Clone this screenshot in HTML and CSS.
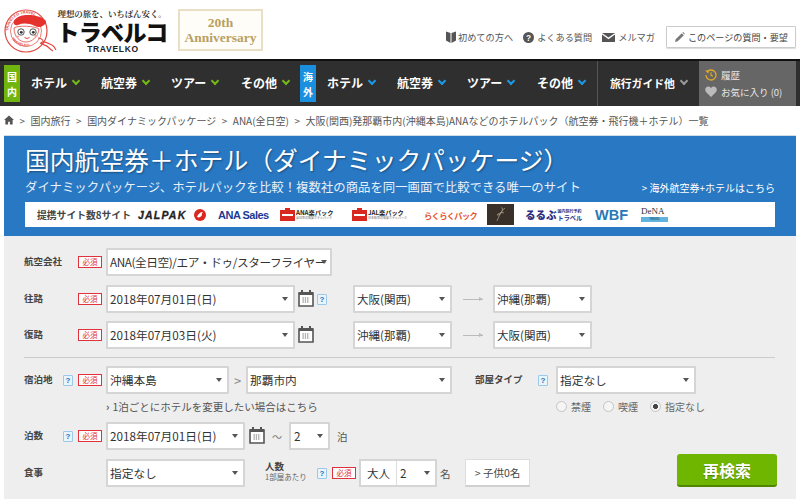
FILE: index.html
```html
<!DOCTYPE html>
<html lang="ja">
<head>
<meta charset="utf-8">
<title>トラベルコ</title>
<link rel="stylesheet" href="styles.css">
</head>
<body>
<header class="top">
  <div class="logo">
    <svg class="mascot" width="58" height="56" viewBox="0 0 58 56">
      <defs><path id="ring" d="M7.500 29a17.500 17.500 0 1 1 35 0"/><path id="ring2" d="M8 31a17.500 17.500 0 0 0 34 0"/></defs>
      <circle cx="25" cy="29" r="21" fill="#fff" stroke="#e2483f" stroke-width="1.200"/>
      <circle cx="25" cy="29" r="15.500" fill="#fff" stroke="#e2483f" stroke-width=".7"/>
      <text class="ring-text"><textPath href="#ring">TRAVELKO TRAVEL</textPath></text>
      <text class="ring-text"><textPath href="#ring2" startOffset="6">TRAVELKO</textPath></text>
      <path d="M13 26c0 9 6 14 12 14s12-5 13-13c-4-3-21-4-25-1z" fill="#fff" stroke="#e2483f" stroke-width=".8"/>
      <path d="M13 19c2-4 8-6 14-6 7 0 14 2 17 5 2 2 1 4-1 5-2 2-6 3-9 1-7-3-12-3-17-1-3 1-5-1-4-4z" fill="#e6322d"/>
      <circle cx="20" cy="30" r="3.200" fill="#fff" stroke="#444" stroke-width=".9"/>
      <circle cx="32" cy="30" r="3.200" fill="#fff" stroke="#444" stroke-width=".9"/>
      <circle cx="20.300" cy="30.300" r="1.400" fill="#333"/>
      <circle cx="32.300" cy="30.300" r="1.400" fill="#333"/>
      <ellipse cx="16.500" cy="34.500" rx="1.800" ry="1" fill="#f2a39c"/>
      <ellipse cx="35" cy="34" rx="1.800" ry="1" fill="#f2a39c"/>
      <path d="M23.500 35.500q2.500 2 5 0" fill="none" stroke="#e2483f" stroke-width="1"/>
      <path d="M37 36c4 0 6 3 5 5s-3 0-1-1c4-1 7 2 10 3 2 1 3 3 4 5M39 41c3 2 6 2 8 4 1 1 3 3 5 4" fill="none" stroke="#e2483f" stroke-width="1.100"/>
    </svg>
    <div class="brand">
      <div class="tagline">理想の旅を、いちばん安く。</div>
      <div class="brand-name">トラベルコ</div>
      <div class="brand-en">TRAVELKO</div>
    </div>
  </div>
  <div class="anniv"><span>20th</span><span>Anniversary</span></div>
  <nav class="util">
    <span class="util-item first">
      <svg width="10" height="12" viewBox="0 0 10 12"><path d="M0 .5l4.500 1.500v10L0 9.500zM10 .5L5.500 2v10L10 9.500z" fill="#555"/></svg>初めての方へ</span>
    <span class="util-item">
      <svg width="11" height="11" viewBox="0 0 12 12"><circle cx="6" cy="6" r="6" fill="#555"/><text x="6" y="9.500" class="q-mark">?</text></svg>よくある質問</span>
    <span class="util-item">
      <svg width="13" height="9" viewBox="0 0 13 9"><path d="M0 0h13L6.500 4.500zM0 1.600l6.500 4.600 6.500-4.600V9H0z" fill="#555"/></svg>メルマガ</span>
    <span class="util-box">
      <svg width="10" height="10" viewBox="0 0 11 11"><path d="M0 11l.8-3L7.500 1.300l2.200 2.200L3 10.200zM8.200.6l.7-.6 2 2-.6.800z" fill="#777"/></svg>このページの質問・要望</span>
  </nav>
</header>

<nav class="gnav">
  <div class="tag tag-green">国<br>内</div>
  <div class="items">
    <span class="item">ホテル<i class="chev green"></i></span>
    <span class="item">航空券<i class="chev green"></i></span>
    <span class="item">ツアー<i class="chev green"></i></span>
    <span class="item">その他<i class="chev green"></i></span>
  </div>
  <div class="tag tag-blue">海<br>外</div>
  <div class="items">
    <span class="item">ホテル<i class="chev blue"></i></span>
    <span class="item">航空券<i class="chev blue"></i></span>
    <span class="item">ツアー<i class="chev blue"></i></span>
    <span class="item">その他<i class="chev blue"></i></span>
  </div>
  <div class="guide">旅行ガイド他<i class="chev gray"></i></div>
  <div class="history">
    <div class="hist-row">
      <svg width="12" height="12" viewBox="0 0 12 12"><path d="M2 3a5 5 0 1 1-1 3" fill="none" stroke="#e0a92a" stroke-width="1.300"/><path d="M0 1.500l3.500 0v3.200z" fill="#e0a92a"/><path d="M6 3.200V6.300l2 1" fill="none" stroke="#e0a92a" stroke-width="1.100"/></svg>
      履歴</div>
    <div class="hist-row">
      <svg width="12" height="11" viewBox="0 0 12 11"><path d="M6 11L1 6C-1 3.500 1 .5 3.300.5 4.500.5 5.500 1.200 6 2.200 6.500 1.200 7.500.5 8.700.5 11 .5 13 3.500 11 6z" fill="#bbb"/></svg>
      お気に入り (0)</div>
  </div>
</nav>

<div class="crumbs">
  <svg width="10" height="10" viewBox="0 0 11 10"><path d="M5.500 0L11 5H9.500v5H6.500V6.800h-2V10h-3V5H0z" fill="#555"/></svg>
  <span>&gt;</span><span>国内旅行</span><span>&gt;</span><span>国内ダイナミックパッケージ</span><span>&gt;</span><span>ANA(全日空)</span><span>&gt;</span><span>大阪(関西)発那覇市内(沖縄本島)ANAなどのホテルパック（航空券・飛行機＋ホテル）一覧</span>
</div>

<section class="hero">
  <h1>国内航空券＋ホテル（ダイナミックパッケージ）</h1>
  <div class="hero-sub">
    <p>ダイナミックパッケージ、ホテルパックを比較！複数社の商品を同一画面で比較できる唯一のサイト</p>
    <a>&gt; 海外航空券+ホテルはこちら</a>
  </div>
  <div class="partners">
    <span class="p-label">提携サイト数8サイト</span>
    <span class="p-jal">JALPAK</span>
    <svg class="p-crane" width="12" height="12" viewBox="0 0 12 12"><circle cx="6" cy="6" r="6" fill="#d8281f"/><path d="M3 8c1-3 3-5 6-5-1 1-1.500 2-1 3-1 2-3 3-5 2z" fill="#fff"/></svg>
    <span class="p-ana">ANA Sales</span>
    <span class="p-pack">
      <svg width="15" height="13" viewBox="0 0 15 13"><path d="M5 2V0h5v2h5v11H0V2z" fill="#d8281f"/><path d="M2 6h11v2H2z" fill="#fff"/></svg>
      <span class="p-lines"><b>ANA楽パック</b><small>全日空の格安ホテルパック</small></span>
    </span>
    <span class="p-pack">
      <svg width="15" height="13" viewBox="0 0 15 13"><path d="M5 2V0h5v2h5v11H0V2z" fill="#d8281f"/><path d="M2 6h11v2H2z" fill="#fff"/></svg>
      <span class="p-lines"><b>JAL楽パック</b><small>日本航空の格安ホテルパック</small></span>
    </span>
    <span class="p-orange">らくらくパック</span>
    <span class="p-dark">
      <svg width="27" height="21" viewBox="0 0 27 21"><path d="M18 4c-3 2-6 8-8 13M14 4c3-1 1 4-1 6s-4 1-2 0 5-2 6-1" fill="none" stroke="#b9a98c" stroke-width=".7"/></svg>
    </span>
    <span class="p-rurubu">るるぶ<small><span>国内旅行予約</span><span class="sm2">トラベル</span></small></span>
    <span class="p-wbf">WBF</span>
    <span class="p-dena"><b>DeNA</b><small>TRAVEL</small></span>
  </div>
</section>

<form class="search">
  <div class="row r-air">
    <label class="lab">航空会社</label><span class="req">必須</span>
    <span class="sel w226 narrow">ANA(全日空)/エア・ドゥ/スターフライヤー</span>
  </div>
  <div class="row r-out">
    <label class="lab">往路</label><span class="req">必須</span>
    <span class="sel w189">2018年07月01日(日)</span>
    <svg class="cal" width="16" height="18"><use href="#ic-cal"/></svg>
    <span class="help help-cal">?</span>
    <span class="sel w99 port1">大阪(関西)</span>
    <i class="arrow"></i>
    <span class="sel w99">沖縄(那覇)</span>
  </div>
  <div class="row r-back">
    <label class="lab">復路</label><span class="req">必須</span>
    <span class="sel w189">2018年07月03日(火)</span>
    <svg class="cal" width="16" height="18"><use href="#ic-cal"/></svg>
    <span class="sel w99 port1">沖縄(那覇)</span>
    <i class="arrow"></i>
    <span class="sel w99">大阪(関西)</span>
  </div>
  <hr class="rule">
  <div class="row r-stay">
    <label class="lab lab-h">宿泊地</label><span class="help">?</span><span class="req">必須</span>
    <span class="sel w123">沖縄本島</span>
    <span class="gt">&gt;</span>
    <span class="sel w206">那覇市内</span>
    <label class="lab lab-room">部屋タイプ</label><span class="help">?</span>
    <span class="sel w140 room">指定なし</span>
  </div>
  <div class="row r-opts">
    <a class="change">1泊ごとにホテルを変更したい場合はこちら</a>
    <span class="radios">
      <span class="radio"><i></i>禁煙</span>
      <span class="radio"><i></i>喫煙</span>
      <span class="radio on"><i></i>指定なし</span>
    </span>
  </div>
  <div class="row r-nights">
    <label class="lab lab-h">泊数</label><span class="help">?</span><span class="req">必須</span>
    <span class="sel w139">2018年07月01日(日)</span>
    <svg class="cal" width="16" height="18"><use href="#ic-cal"/></svg>
    <span class="tilde">〜</span>
    <span class="sel w41">2</span>
    <span class="unit">泊</span>
  </div>
  <div class="row r-meal">
    <label class="lab">食事</label><span class="req req-hidden">必須</span>
    <span class="sel w139">指定なし</span>
    <span class="people"><b>人数</b><small>1部屋あたり</small></span>
    <span class="help">?</span><span class="req">必須</span>
    <span class="combo"><span class="combo-l">大人</span><span class="combo-r">2</span></span>
    <span class="unit mei">名</span>
    <span class="child">&gt; 子供0名</span>
    <button class="go" type="button">再検索</button>
  </div>
</form>

<svg class="defs" width="0" height="0">
  <symbol id="ic-cal" viewBox="0 0 16 18">
    <path d="M1 4h14v13H1z" fill="#fff" stroke="#555" stroke-width="1.600"/>
    <path d="M1 3h14v3H1z" fill="#555"/>
    <path d="M4 1v4M12 1v4" stroke="#555" stroke-width="2"/>
    <path d="M4.500 9h7M4.500 11h7M4.500 13h7" stroke="#666" stroke-width="1.100" stroke-dasharray="1.300 1"/>
  </symbol>
</svg>
</body>
</html>
```
FILE: styles.css
```css
* { box-sizing: border-box; }
html, body { margin: 0; padding: 0; }
body {
  width: 800px;
  height: 499px;
  overflow: hidden;
  background: #fff;
  color: #333;
  font-family: "Noto Sans CJK JP", "Noto Sans", sans-serif;
  font-size: 10px;
}
.defs { display: block; }

/* header */
.top { display: flex; height: 59px; align-items: flex-start; }
.logo { display: flex; width: 172px; padding-left: 1px; flex: none; }
.mascot { margin-top: 2px; flex: none; }
.ring-text { font: bold 3.800px "Liberation Sans", sans-serif; fill: #e2483f; }
.brand { display: flex; flex-direction: column; align-items: center; width: 106px; flex: none; }
.tagline { margin-top: 8px; font-size: 8.500px; line-height: 10px; font-family: "Noto Serif CJK JP", "Noto Sans CJK JP", serif; font-weight: 700; letter-spacing: -.1px; white-space: nowrap; }
.brand-name { margin-top: 1px; font-size: 23px; line-height: 25px; font-weight: 900; color: #111; letter-spacing: -.7px; white-space: nowrap; }
.brand-en { font: bold 8.500px/10px "Liberation Sans", sans-serif; letter-spacing: .7px; color: #222; margin-left: 2px; }
.anniv {
  margin: 9px 0 0 6px; width: 85px; height: 42px; flex: none;
  border: 2px solid #eadfc4; background: #fefdf8; color: #b8a060;
  display: flex; flex-direction: column; align-items: center; justify-content: center;
  font: bold 13.500px/15px "Liberation Serif", serif;
}
.util { margin: 26px 0 0 auto; padding-right: 4px; display: flex; align-items: center; color: #555; font-size: 9.200px; }
.util-item { display: flex; align-items: center; gap: 3px; margin-right: 10px; white-space: nowrap; height: 22px; }
.util-item.first { gap: 2px; }
.util-item:nth-child(3) { margin-right: 11px; }
.util-box { display: flex; align-items: center; gap: 3px; width: 130px; height: 22px; padding-left: 8px; border: 1px solid #ccc; white-space: nowrap; border-radius: 1px; box-shadow: 0 1px 1px #ddd; color: #444; font-size: 9.100px; }
.q-mark { font: bold 9px "Liberation Sans", sans-serif; fill: #fff; text-anchor: middle; }

/* global nav */
.gnav { display: flex; height: 47px; background: #2f2f2f; border-top: 2px solid #111; padding-left: 4px; color: #fff; align-items: stretch; }
.tag { width: 16px; height: 37px; margin-top: 4px; color: #fff; font-size: 10px; font-weight: 700; line-height: 15px; text-align: center; padding-top: 4px; flex: none; }
.tag-green { background: #6fb40f; }
.tag-blue { background: #1a8fe0; }
.items { display: flex; width: 280px; padding-left: 11px; flex: none; }
.item { width: 70px; flex: none; font-size: 12px; font-weight: 700; display: flex; align-items: center; white-space: nowrap; padding-bottom: 2px; }
.chev { display: inline-block; width: 6px; height: 6px; border-right: 2px solid; border-bottom: 2px solid; transform: rotate(45deg); margin: -3px 0 0 6px; flex: none; }
.chev.green { color: #74b816; }
.chev.blue { color: #1d9ae6; }
.chev.gray { color: #999; }
.guide { width: 102px; margin-left: 1px; padding-left: 12px; border-left: 1px solid #555; display: flex; align-items: center; font-size: 10.800px; font-weight: 700; white-space: nowrap; padding-bottom: 2px; flex: none; }
.history { width: 97px; background: #666; color: #e6e6e6; font-size: 9.500px; padding: 5px 0 0 6px; flex: none; }
.hist-row { display: flex; align-items: center; gap: 4px; height: 17px; white-space: nowrap; }

/* breadcrumb */
.crumbs { display: flex; align-items: center; gap: 5.500px; height: 29px; padding: 0 0 1px 4px; color: #555; font-size: 10px; white-space: nowrap; }

/* hero */
.hero { margin: 0 4px; height: 101px; background: #2878c3; color: #fff; padding: 7px 21px 0; border-top: 1px solid #cfdde9; }
.hero h1 { margin: 0; font-size: 24.800px; line-height: 33px; font-weight: 400; text-shadow: 1px 1px 2px rgba(0,0,0,.35); white-space: nowrap; }
.hero-sub { display: flex; justify-content: space-between; align-items: center; height: 22px; white-space: nowrap; }
.hero-sub p { margin: 0; font-size: 12.400px; color: #e8f1fa; }
.hero-sub a { font-size: 10px; }
.partners { display: flex; align-items: center; height: 25px; margin-top: 4px; background: #fff; color: #333; padding-left: 12px; white-space: nowrap; }
.p-label { font-size: 9.800px; font-weight: 700; color: #444; width: 101px; flex: none; }
.p-jal { font: italic 900 10.500px "Liberation Sans", sans-serif; letter-spacing: 1.200px; color: #222; -webkit-text-stroke: .3px #222; width: 56px; flex: none; }
.p-crane { flex: none; }
.p-ana { font: bold 11px "Liberation Sans Narrow", "Liberation Sans", sans-serif; letter-spacing: -.5px; color: #1f3a93; margin-left: 12px; width: 62px; flex: none; }
.p-pack { display: flex; align-items: center; gap: 1px; width: 72px; flex: none; }
.p-lines { display: flex; flex-direction: column; color: #222; }
.p-lines b { font: bold 6.200px/7px "Noto Sans CJK JP", sans-serif; }
.p-lines small { font-size: 3px; line-height: 4px; color: #666; }
.p-orange { color: #e8542a; font-weight: 700; font-size: 8.200px; width: 63px; letter-spacing: -.6px; flex: none; }
.p-dark { width: 27px; height: 21px; background: #3a302a; display: block; flex: none; }
.p-dark svg { display: block; }
.p-rurubu { display: flex; align-items: center; margin-left: 11px; width: 57px; font-size: 10.500px; font-weight: 900; color: #2b2f82; flex: none; }
.p-rurubu small { display: flex; flex-direction: column; font-size: 4px; line-height: 5px; font-weight: 700; margin-left: 1px; }
.p-rurubu .sm2 { font-size: 6.200px; line-height: 7px; }
.p-wbf { font: bold 14.500px "Liberation Sans", sans-serif; color: #2a78b6; margin-left: 13px; width: 46px; flex: none; }
.p-dena { display: flex; flex-direction: column; width: 27px; color: #333; margin-top: -2px; flex: none; }
.p-dena b { font: 9px/11px "Liberation Serif", serif; }
.p-dena small { display: block; background: #5fb3dc; font-size: 3px; line-height: 5px; color: #134; text-align: center; }

/* form */
.search { margin: 0 4px; height: 263px; background: #eee; padding: 12px 0 0 20px; }
.row { display: flex; align-items: center; height: 28px; white-space: nowrap; }
.lab { width: 54px; font-size: 9.500px; font-weight: 700; color: #444; flex: none; margin-top: -3px; }
.lab-h { width: 39px; }
.req { width: 24px; height: 12px; border: 1.500px solid #e0313c; background: #fff; color: #e0313c; font-size: 7.500px; line-height: 9px; text-align: center; flex: none; margin-right: 4px; }
.req-hidden { visibility: hidden; }
.help { width: 10px; height: 11px; border: 1px solid #9cc8ea; background: #eaf4fb; color: #1e73be; font: bold 8px/9px "Liberation Sans", sans-serif; text-align: center; border-radius: 1px; flex: none; margin-right: 5px; }
.sel { position: relative; display: block; height: 28px; background: #fff; border: 2px solid #d5d5d5; border-radius: 1px; font-size: 11.700px; line-height: 24px; padding-left: 2px; color: #333; flex: none; overflow: hidden; }
.sel::after, .combo-r::after { content: ""; position: absolute; right: 5px; top: 10px; border: 3.500px solid transparent; border-top: 4px solid #555; border-bottom: 0; }
.narrow { letter-spacing: -.42px; }
.narrow::after { right: 3px; }
.w226 { width: 226px; }
.w189 { width: 189px; }
.w99 { width: 99px; font-size: 11.500px; }
.w123 { width: 123px; }
.w206 { width: 206px; }
.w140 { width: 140px; }
.w139 { width: 139px; }
.w41 { width: 41px; padding-left: 3px; }
.cal { flex: none; margin: -3px 0 0 3px; }
.help-cal { margin: 0 0 0 3px; }
.port1 { margin-left: 26px; }
.r-air { margin-bottom: 9px; }
.r-out { margin-bottom: 8px; }
.r-back .port1 { margin-left: 39px; }
.arrow { position: relative; width: 20px; height: 1px; background: #bbb; margin: 0 10px 0 11px; flex: none; }
.arrow::after { content: ""; position: absolute; right: 0; top: -2px; border-left: 4px solid #bbb; border-top: 2.500px solid transparent; border-bottom: 2.500px solid transparent; }
.rule { margin: 8px 21px 8px 0; border: 0; border-top: 1px solid #ccc; height: 0; }
.gt { width: 17px; text-align: center; font-size: 13px; color: #888; flex: none; }
.lab-room { width: 63px; margin-left: 23px; }
.room { margin-left: 3px; }
.r-opts { height: 16px; margin: 4px 0 8px 0; padding-left: 82px; font-size: 10.500px; color: #555; }
.change { width: 268px; flex: none; }
.change::before { content: "›"; font-weight: 700; margin-right: 3px; }
.radios { display: flex; margin-left: 182px; }
.radio { display: flex; align-items: center; gap: 4px; margin-right: 12px; color: #666; font-size: 10px; }
.radio i { width: 11px; height: 11px; border-radius: 50%; border: 1px solid #c4c4c4; background: #f5f5f5; flex: none; }
.radio.on i { background: radial-gradient(circle, #444 0 2.200px, #f5f5f5 2.800px); }
.r-nights { margin-bottom: 9px; }
.r-nights .cal { margin-left: 4px; }
.tilde { margin: 0 5px 0 7px; color: #777; font-size: 10px; width: 12px; flex: none; }
.unit { margin-left: 7px; font-size: 10.500px; color: #555; flex: none; }
.people { width: 52px; margin-left: 20px; display: flex; flex-direction: column; flex: none; margin-top: -3px; }
.people b { font-size: 9.500px; line-height: 11px; color: #444; }
.people small { font-size: 7.500px; line-height: 10px; color: #666; }
.r-meal .req { margin-right: 3px; }
.r-meal .req-hidden { margin-right: 4px; }
.combo { display: flex; width: 78px; height: 28px; background: #fff; border: 2px solid #d5d5d5; flex: none; }
.combo-l { width: 36px; border-right: 1px solid #ddd; font-size: 11.500px; line-height: 24px; text-align: center; }
.combo-r { position: relative; flex: 1; font-size: 11.700px; line-height: 24px; padding-left: 3px; }
.mei { margin-left: 3px; width: 25px; }
.child { width: 65px; height: 28px; background: #fff; border: 1px solid #ddd; border-bottom: 2px solid #d0d0d0; font-size: 10.500px; line-height: 25px; text-align: center; color: #444; flex: none; }
.go { margin: -5px 0 0 147px; width: 100px; height: 33px; border: 0; border-bottom: 2px solid #4f8500; border-radius: 3px; background: #6fb600; color: #fff; font: 700 16px "Noto Sans CJK JP", sans-serif; text-shadow: 0 1px 1px rgba(0,0,0,.3); flex: none; padding: 0; }
```
